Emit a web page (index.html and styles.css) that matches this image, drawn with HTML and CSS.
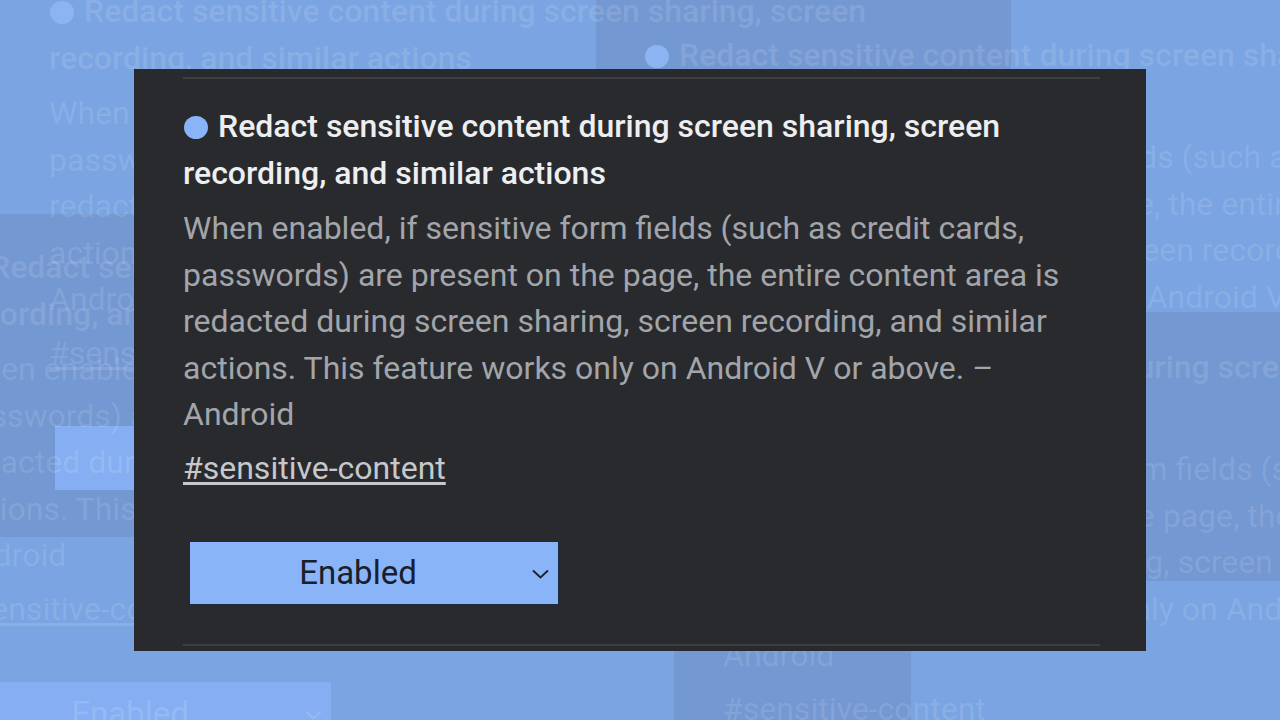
FILE: index.html
```html
<!DOCTYPE html>
<html lang="en">
<head>
    <meta charset="UTF-8">
    <meta name="viewport" content="width=device-width, initial-scale=1.0">
    <title>Sensitive content flag</title>
    <link rel="stylesheet" href="styles.css">
</head>
<body>
    <!-- faded copies behind the card -->
    <div class="backdrop">
        <div class="tint dark" style="left: 596px; top: 0; width: 415px; height: 80px;"></div>
        <div class="tint dark" style="left: 0; top: 214px; width: 140px; height: 323px;"></div>
        <div class="tint dark" style="left: 1140px; top: 312px; width: 140px; height: 269px;"></div>
        <div class="tint dark" style="left: 674px; top: 640px; width: 237px; height: 80px;"></div>

        <div class="flag ghost" style="left: 49px; top: -36px;">
            <h2 class="flag-title"><span class="dot"></span>Redact sensitive content during screen sharing, screen recording, and similar actions</h2>
            <p class="flag-desc">When enabled, if sensitive form fields (such as credit cards, passwords) are present on the page, the entire content area is redacted during screen sharing, screen recording, and similar actions. This feature works only on Android V or above. – Android</p>
            <a class="flag-link" href="#sensitive-content">#sensitive-content</a>
            <div class="select"><span class="select-value">Enabled</span></div>
        </div>

        <div class="flag ghost" style="left: 644px; top: 8px;">
            <h2 class="flag-title"><span class="dot"></span>Redact sensitive content during screen sharing, screen recording, and similar actions</h2>
            <p class="flag-desc">When enabled, if sensitive form fields (such as credit cards, passwords) are present on the page, the entire content area is redacted during screen sharing, screen recording, and similar actions. This feature works only on Android V or above. – Android</p>
        </div>

        <div class="flag ghost" style="left: 723px; top: 320px;">
            <h2 class="flag-title"><span class="dot"></span>Redact sensitive content during screen sharing, screen recording, and similar actions</h2>
            <p class="flag-desc">When enabled, if sensitive form fields (such as credit cards, passwords) are present on the page, the entire content area is redacted during screen sharing, screen recording, and similar actions. This feature works only on Android V or above. – Android</p>
            <a class="flag-link" href="#sensitive-content">#sensitive-content</a>
        </div>

        <div class="flag ghost" style="left: -45px; top: 220px;">
            <h2 class="flag-title"><span class="dot"></span>Redact sensitive content during screen sharing, screen recording, and similar actions</h2>
            <p class="flag-desc">When enabled, if sensitive form fields (such as credit cards, passwords) are present on the page, the entire content area is redacted during screen sharing, screen recording, and similar actions. This feature works only on Android V or above. – Android</p>
            <a class="flag-link" href="#sensitive-content">#sensitive-content</a>
            <div class="select">
                <span class="select-value">Enabled</span>
                <svg class="chevron" width="17" height="10" viewBox="0 0 17 10"><polyline points="1,1.5 8.5,8.5 16,1.5" fill="none" stroke="currentColor" stroke-width="1.8"/></svg>
            </div>
        </div>
    </div>

    <div class="card">
        <div class="rule"></div>
        <div class="flag">
            <h2 class="flag-title"><span class="dot"></span>Redact sensitive content during screen sharing, screen recording, and similar actions</h2>
            <p class="flag-desc">When enabled, if sensitive form fields (such as credit cards, passwords) are present on the page, the entire content area is redacted during screen sharing, screen recording, and similar actions. This feature works only on Android V or above. – Android</p>
            <a class="flag-link" href="#sensitive-content">#sensitive-content</a>
            <div class="select">
                <span class="select-value">Enabled</span>
                <svg class="chevron" width="17" height="10" viewBox="0 0 17 10"><polyline points="1,1.5 8.5,8.5 16,1.5" fill="none" stroke="currentColor" stroke-width="1.8"/></svg>
            </div>
        </div>
        <div class="rule bottom"></div>
    </div>
</body>
</html>
```

FILE: styles.css
```css
body {
    margin: 0;
    height: 720px;
    position: relative;
    overflow: hidden;
    font-family: 'Roboto', 'Liberation Sans', sans-serif;
    background-color: #7aa4e2;
}

.backdrop {
    position: absolute;
    inset: 0;
    overflow: hidden;
}

.tint {
    position: absolute;
}

.tint.dark {
    background-color: #7398d2;
}

/* card */

.card {
    position: relative;
    z-index: 1;
    width: 1012px;
    height: 582px;
    margin: 69px 0 0 134px;
    padding: 8px 46px 0 49px;
    box-sizing: border-box;
    background-color: #292a2e;
}

.rule {
    height: 2px;
    background-color: #3d3e42;
}

.rule.bottom {
    margin-top: 39px;
}

.flag {
    width: 917px;
}

.flag-title {
    margin: 24px 0 0;
    font-size: 32px;
    font-weight: 500;
    line-height: 47px;
    color: #eceef0;
}

.dot {
    display: inline-block;
    width: 24px;
    height: 23px;
    margin: 0 10px 0 1px;
    border-radius: 50%;
    background-color: #8ab4f8;
    vertical-align: -2px;
}

.flag-desc {
    max-width: 900px;
    margin: 8px 0 0;
    font-size: 32px;
    line-height: 46.5px;
    color: #a2a5aa;
}

.flag-link {
    display: inline-block;
    margin-top: 7px;
    font-size: 32px;
    line-height: 46px;
    color: #c6c8cb;
    text-decoration: underline;
    text-underline-offset: 3px;
}

.select {
    display: flex;
    align-items: center;
    width: 370px;
    height: 64px;
    margin: 50px 0 0 6px;
    box-sizing: border-box;
    border: 1px solid #1d2a40;
    background-color: #8ab4f8;
    color: #18202e;
}

.select-value {
    flex: 1;
    text-align: center;
    font-size: 33px;
}

.chevron {
    margin: 2px 9px 0 6px;
}

/* faded copies */

.flag.ghost {
    position: absolute;
    margin: 0;
}

.ghost .flag-title {
    margin-top: 24px;
    color: rgba(255, 255, 255, 0.13);
}

.ghost .dot {
    background-color: #8cb4f2;
}

.ghost .flag-desc,
.ghost .flag-link {
    color: rgba(255, 255, 255, 0.12);
}

.ghost .select {
    border: none;
    background-color: #85aff2;
    color: rgba(255, 255, 255, 0.14);
}
```
